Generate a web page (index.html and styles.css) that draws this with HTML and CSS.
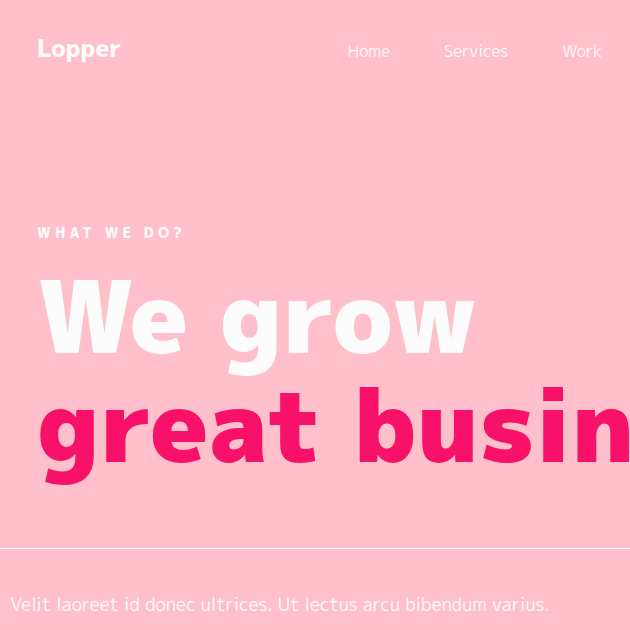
FILE: index.html
```html
<!DOCTYPE html>
<html lang="en">
<head>
<meta charset="utf-8">
<title>Lopper</title>
<link rel="stylesheet" href="styles.css">
</head>
<body>
<header class="header">
  <a class="logo" href="#">Lopper</a>
  <nav class="nav">
    <a href="#">Home</a>
    <a href="#">Services</a>
    <a href="#">Work</a>
  </nav>
</header>
<main>
  <section class="hero">
    <p class="eyebrow">WHAT WE DO?</p>
    <h1 class="title">We grow <span class="accent">great business</span></h1>
  </section>
  <p class="intro">Velit laoreet id donec ultrices. Ut lectus arcu bibendum varius.</p>
</main>
</body>
</html>
```
FILE: styles.css
```css
body {
  margin: 0;
  background: #ffc0cb;
  color: #fcfcfc;
  font-family: "M PLUS 1p", "Mplus 1p", "Open Sans", "Noto Sans", sans-serif;
  font-weight: 400;
}

a {
  color: inherit;
  text-decoration: none;
}

.header {
  display: flex;
  align-items: center;
  justify-content: space-between;
  height: 96px;
  padding: 0 28px 0 37px;
}

.logo {
  font-size: 24px;
  font-weight: 800;
}

.nav {
  display: flex;
  gap: 54px;
  padding-top: 6px;
  font-size: 16px;
}

.hero {
  padding: 125px 0 68px 37px;
  border-bottom: 1px solid #ffffff;
  overflow: hidden;
}

.eyebrow {
  margin: 0 0 17px;
  font-size: 14px;
  font-weight: 800;
  line-height: 24px;
  letter-spacing: 0.3em;
}

.title {
  margin: 0;
  font-size: 99px;
  font-weight: 900;
  line-height: 109px;
  white-space: nowrap;
}

.accent {
  display: block;
  color: #f81168;
}

.intro {
  margin: 0;
  padding: 42px 10px 0;
  font-size: 18px;
  line-height: 28px;
}
```
